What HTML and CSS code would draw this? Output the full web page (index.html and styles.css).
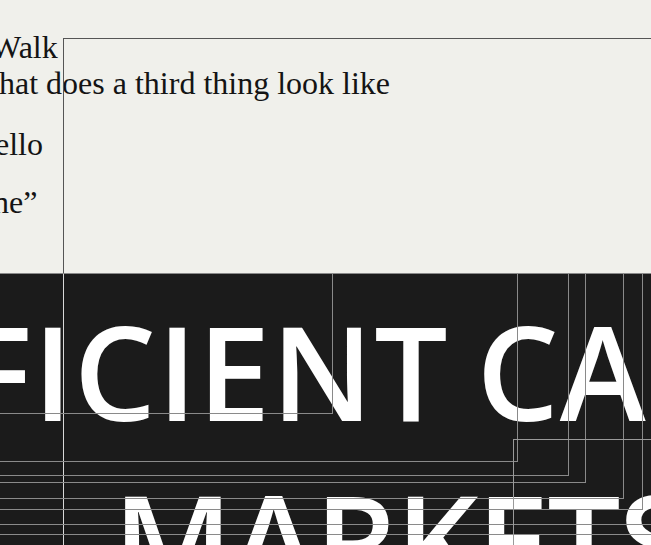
FILE: index.html
```html
<!DOCTYPE html>
<html lang="en">
<head>
<meta charset="utf-8">
<title>Efficient Capital Markets</title>
<link rel="stylesheet" href="styles.css">
</head>
<body>
<div class="page">
  <section class="intro">
    <div class="line walk">Walk</div>
    <div class="line question">hat does a third thing look like</div>
    <div class="line hello">ello</div>
    <div class="line quote">ne”</div>
    <div class="frame"></div>
  </section>
  <section class="hero">
    <h1 class="title">
      <span class="title-line first">EFFICIENT CAPITAL</span>
      <span class="title-line second">MARKETS</span>
    </h1>
    <div class="vline"></div>
    <div class="guide g1"></div>
    <div class="guide g2"></div>
    <div class="guide g3"></div>
    <div class="guide g4"></div>
    <div class="guide g5"></div>
    <div class="guide g6"></div>
    <div class="guide g7"></div>
    <div class="guide g8"></div>
    <div class="guide g9"></div>
  </section>
</div>
</body>
</html>
```

FILE: styles.css
```css
* { box-sizing: border-box; }
html, body {
  margin: 0;
  padding: 0;
  background: #f0f0eb;
  overflow: hidden;
}
.page {
  position: relative;
  width: 651px;
  height: 545px;
  overflow: hidden;
  display: flex;
  flex-direction: column;
}
.intro {
  position: relative;
  height: 273px;
  flex: none;
  padding-top: 29px;
  font-family: "Liberation Serif", "Times New Roman", serif;
  font-size: 32px;
  color: #141414;
}
.line {
  line-height: 36px;
  white-space: nowrap;
}
.walk { margin-left: -9px; }
.question { margin-left: -1px; }
.hello { margin-left: -5px; margin-top: 25px; }
.quote { margin-left: -7px; margin-top: 22px; }
.frame {
  position: absolute;
  left: 63px;
  top: 38px;
  width: 700px;
  height: 300px;
  border-top: 1px solid #555;
  border-left: 1px solid #555;
}
.hero {
  position: relative;
  flex: 1;
  background: #1b1b1b;
  border-top: 1px solid #c4c4c4;
  padding-top: 12px;
}
.title {
  margin: 0;
  font-family: "Open Sans", "Noto Sans", sans-serif;
  font-weight: 600;
  font-size: 130px;
  line-height: 169px;
  letter-spacing: 1px;
  color: #fff;
  white-space: nowrap;
}
.title-line { display: block; }
.first { margin-left: -181px; word-spacing: -7px; }
.second { margin-left: 113px; letter-spacing: -2px; }
.vline {
  position: absolute;
  left: 63px;
  top: -1px;
  bottom: 0;
  width: 1px;
  background: #d8d8d8;
}
.guide {
  position: absolute;
  left: -10px;
  top: -1px;
  border: 1px solid #8a8a8a;
}
.g1 { width: 343px; height: 141px; }
.g2 { width: 528px; height: 189px; }
.g3 { width: 579px; height: 203px; }
.g4 { width: 596px; height: 210px; }
.g5 { width: 634px; height: 226px; }
.g6 { width: 653px; height: 237px; }
.g7 { width: 700px; height: 252px; }
.g8 { width: 700px; height: 262px; }
.g9 { left: 513px; top: 165px; width: 300px; height: 300px; border-color: #9a9a9a; }
```
